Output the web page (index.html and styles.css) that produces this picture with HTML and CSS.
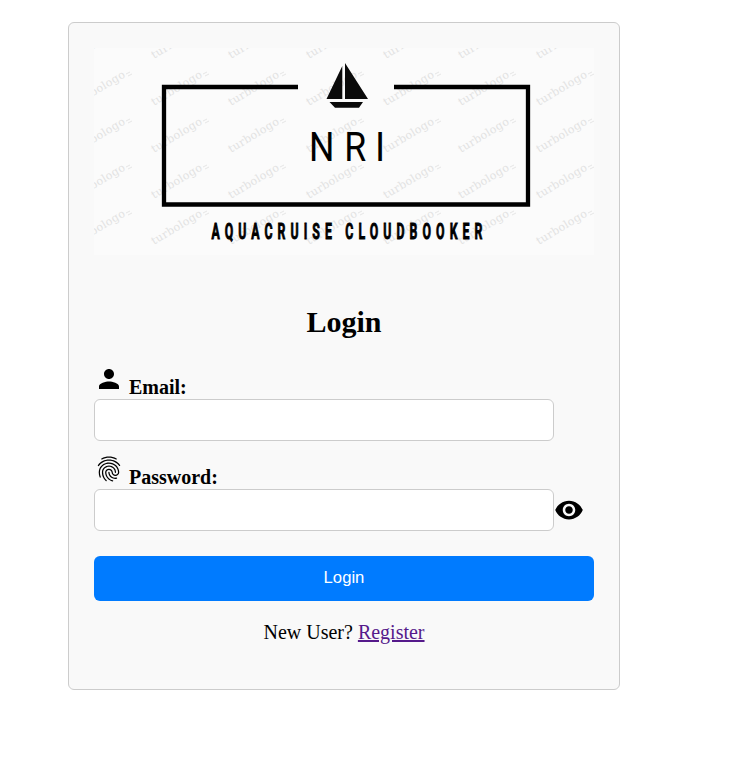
FILE: index.html
```
<!DOCTYPE html>
<html lang="en">
<head>
<meta charset="utf-8">
<title>Login</title>
<link rel="stylesheet" href="styles.css">
</head>
<body>
<main class="card">
  <svg class="logo" viewBox="94 48 500 208" role="img" aria-label="NRI Aquacruise Cloudbooker">
    <defs>
      <g id="mark"><text class="mark-text" transform="translate(1 0) rotate(-31)" textLength="57">turbologo</text><path class="mark-flag" d="M50-32l4-2m-2 4l4-2"/></g>
      <g id="column"><use href="#mark" y="59"/><use href="#mark" y="106"/><use href="#mark" y="153"/><use href="#mark" y="199"/><use href="#mark" y="245"/></g>
    </defs>
    <rect class="logo-bg" x="94" y="48" width="500" height="207"/>
    <g class="marks">
      <use href="#column" x="76"/><use href="#column" x="153"/><use href="#column" x="230"/><use href="#column" x="308"/><use href="#column" x="385"/><use href="#column" x="460"/><use href="#column" x="538"/>
    </g>
    <path class="frame" d="M298 87H164V204.500H528V87H394"/>
    <path class="boat" d="M342.300 66V99H326.500zM345 63V99H368zM329.500 102H363L359 107.700H335z"/>
    <g class="initials">
      <text transform="translate(309 161) scale(.88 1)">N</text>
      <text transform="translate(344.200 161) scale(.88 1)">R</text>
      <text transform="translate(375 161) scale(.92 1)">I</text>
    </g>
    <g class="tagline">
      <text transform="translate(211.500 239.200) scale(.56 1)" textLength="215">AQUACRUISE</text>
      <text transform="translate(345.300 239.200) scale(.56 1)" textLength="245">CLOUDBOOKER</text>
    </g>
  </svg>
  <h1 class="title">Login</h1>
  <form class="form">
    <div class="field">
      <label class="label" for="email"><svg class="icon" viewBox="0 0 24 24"><path d="M12 12c2.210 0 4-1.790 4-4s-1.790-4-4-4-4 1.790-4 4 1.790 4 4 4zm0 2c-2.670 0-8 1.340-8 4v2h16v-2c0-2.660-5.330-4-8-4z"/></svg><span>Email:</span></label>
      <div class="row"><input class="input" id="email" type="email"></div>
    </div>
    <div class="field">
      <label class="label" for="password"><svg class="icon" viewBox="0 0 24 24"><path d="M17.81 4.47c-.08 0-.16-.02-.23-.06C15.66 3.42 14 3 12.01 3c-1.98 0-3.86.47-5.57 1.41-.24.13-.54.04-.68-.2-.13-.24-.04-.55.2-.68C7.82 2.52 9.86 2 12.01 2c2.13 0 3.99.47 6.03 1.52.25.13.34.43.21.67-.09.18-.26.28-.44.28zM3.5 9.72c-.1 0-.2-.03-.29-.09-.23-.16-.28-.47-.12-.7.99-1.4 2.25-2.5 3.75-3.27C9.98 4.04 14 4.03 17.15 5.65c1.5.77 2.76 1.86 3.75 3.25.16.22.11.54-.12.7-.23.16-.54.11-.7-.12-.9-1.26-2.04-2.25-3.39-2.94-2.87-1.47-6.54-1.47-9.4.01-1.36.7-2.5 1.7-3.4 2.96-.08.14-.23.21-.39.21zm6.25 12.07c-.13 0-.26-.05-.35-.15-.87-.87-1.34-1.43-2.01-2.64-.69-1.23-1.05-2.73-1.05-4.34 0-2.97 2.54-5.39 5.66-5.39s5.66 2.42 5.66 5.39c0 .28-.22.5-.5.5s-.5-.22-.5-.5c0-2.42-2.09-4.39-4.66-4.39-2.57 0-4.66 1.97-4.66 4.39 0 1.44.32 2.77.93 3.85.64 1.15 1.08 1.64 1.85 2.42.19.2.19.51 0 .71-.11.1-.24.15-.37.15zm7.17-1.85c-1.19 0-2.24-.3-3.1-.89-1.49-1.01-2.38-2.65-2.38-4.39 0-.28.22-.5.5-.5s.5.22.5.5c0 1.41.72 2.74 1.94 3.56.71.48 1.54.71 2.54.71.24 0 .64-.03 1.04-.1.27-.05.53.13.58.41.05.27-.13.53-.41.58-.57.11-1.07.12-1.21.12zM14.91 22c-.04 0-.09-.01-.13-.02-1.59-.44-2.63-1.03-3.72-2.1-1.4-1.39-2.17-3.24-2.17-5.22 0-1.62 1.38-2.94 3.08-2.94 1.7 0 3.08 1.32 3.08 2.94 0 1.07.93 1.94 2.08 1.94s2.08-.87 2.08-1.94c0-3.77-3.25-6.83-7.25-6.83-2.84 0-5.44 1.58-6.61 4.03-.39.81-.59 1.76-.59 2.8 0 .78.07 2.01.67 3.61.1.26-.03.55-.29.64-.26.1-.55-.04-.64-.29-.49-1.31-.73-2.61-.73-3.96 0-1.2.23-2.29.68-3.24 1.33-2.79 4.28-4.6 7.51-4.6 4.55 0 8.25 3.51 8.25 7.83 0 1.62-1.38 2.94-3.08 2.94s-3.08-1.32-3.08-2.94c0-1.07-.93-1.94-2.08-1.94s-2.08.87-2.08 1.94c0 1.71.66 3.31 1.87 4.51.95.94 1.86 1.46 3.27 1.85.27.07.42.35.35.61-.05.23-.26.38-.47.38z"/></svg><span>Password:</span></label>
      <div class="row"><input class="input" id="password" type="password"><svg class="icon" viewBox="0 0 24 24"><path d="M12 4.500C7 4.500 2.730 7.610 1 12c1.730 4.390 6 7.500 11 7.500s9.270-3.110 11-7.500c-1.730-4.390-6-7.500-11-7.500zM12 17c-2.760 0-5-2.240-5-5s2.240-5 5-5 5 2.240 5 5-2.240 5-5 5zm0-8c-1.660 0-3 1.340-3 3s1.340 3 3 3 3-1.340 3-3-1.340-3-3-3z"/></svg></div>
    </div>
    <button class="submit" type="button">Login</button>
  </form>
  <p class="signup">New User? <a class="link" href="#">Register</a></p>
</main>
</body>
</html>
```
FILE: styles.css
```
* { box-sizing: border-box; }

body {
  margin: 0;
  background: #fff;
  color: #000;
  font: 20px/23px "Liberation Serif", "Times New Roman", serif;
}

.card {
  width: 552px;
  height: 668px;
  margin: 22px 0 0 68px;
  padding: 25px;
  border: 1px solid #ccc;
  border-radius: 6px;
  background: #f9f9f9;
}

.logo { display: block; width: 500px; height: 208px; }
.logo-bg { fill: #fbfbfb; }
.mark-text { font: 11px "DejaVu Serif", serif; fill: #e2e2e2; }
.mark-flag { fill: none; stroke: #e6e6e6; }
.frame { fill: none; stroke: #000; stroke-width: 4.300; }
.boat { fill: #0a0a0a; }
.initials { font: 40.500px Roboto, sans-serif; }
.tagline { font: bold 22px Roboto, sans-serif; stroke: #000; stroke-width: .9; }

.title {
  margin: 49px 0 25px;
  font-size: 30px;
  line-height: 34px;
  text-align: center;
}

.form { display: flex; flex-direction: column; }
.field { margin-bottom: 13px; }

.label {
  display: flex;
  align-items: flex-start;
  gap: 5px;
  height: 35px;
  font-weight: bold;
}
.label span { margin-top: 12px; }

.icon { display: block; flex: none; width: 30px; height: 30px; }
.row { display: flex; align-items: center; }

.input {
  width: 460px;
  height: 42px;
  padding: 10px;
  border: 1px solid #ccc;
  border-radius: 6px;
  background: #fff;
  font: inherit;
}

.submit {
  height: 45px;
  margin-top: 12px;
  padding: 0 0 2px;
  border: 0;
  border-radius: 6px;
  background: #007bff;
  color: #fff;
  font: 16.667px "Liberation Sans", Arial, sans-serif;
}

.signup { margin: 20px 0 0; text-align: center; }
.link { color: #551a8b; }
```
